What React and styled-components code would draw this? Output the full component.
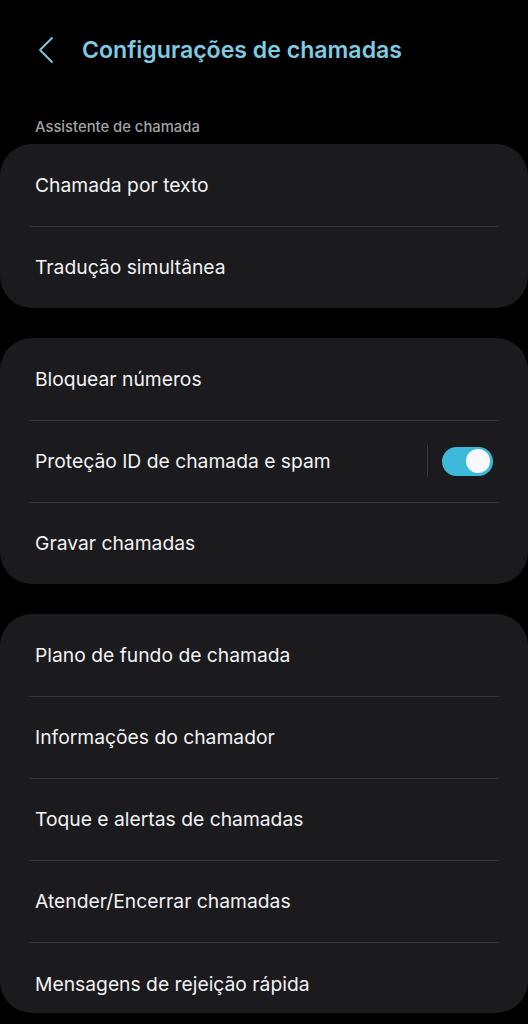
import React from "react"
import styled, { createGlobalStyle } from "styled-components"

const Global = createGlobalStyle`
  html, body {
    margin: 0;
    padding: 0;
    background: #000;
  }
  body {
    font-family: Inter, "Noto Sans", Roboto, sans-serif;
    -webkit-font-smoothing: antialiased;
  }
`

const Screen = styled.div`
  width: 528px;
  height: 1024px;
  overflow: hidden;
  background: #000;
`

const Header = styled.div`
  height: 100px;
  display: flex;
  align-items: center;
  padding-left: 36px;
  box-sizing: border-box;
`

const Back = styled.button`
  width: 20px;
  height: 30px;
  padding: 0;
  border: none;
  background: none;
  display: flex;
  align-items: center;
  justify-content: center;
  margin-right: 26px;
`

const Title = styled.h1`
  margin: 0;
  font-size: 23.1px;
  font-weight: 600;
  color: #7fcbe2;
`

const SectionLabel = styled.div`
  padding: 18px 35px 8px;
  font-size: 14.8px;
  line-height: 18px;
  font-weight: 500;
  color: #a3a3a6;
`

const Card = styled.div`
  background: #1b1b1d;
  border-radius: 32px;
  margin-bottom: 30px;
  display: flex;
  flex-direction: column;
`

const Row = styled.div`
  height: ${p => p.$h || 82}px;
  flex-shrink: 0;
  display: flex;
  align-items: center;
  padding: ${p => p.$pt || 0}px 35px 0;
  position: relative;
  box-sizing: border-box;

  &:not(:first-child)::before {
    content: "";
    position: absolute;
    top: 0;
    left: 29px;
    right: 29px;
    height: 1px;
    background: #343437;
  }
`

const Label = styled.span`
  flex: 1;
  font-size: 19.3px;
  color: #f2f2f4;
`

const VDivider = styled.div`
  width: 1px;
  height: 32px;
  background: #3a3a3d;
  margin-right: 14px;
`

const Switch = styled.div`
  width: 51px;
  height: 29px;
  border-radius: 15px;
  background: ${p => (p.$on ? "#3db9da" : "#555")};
  display: flex;
  align-items: center;
  justify-content: ${p => (p.$on ? "flex-end" : "flex-start")};
  padding: 0 3px;
  box-sizing: border-box;
`

const Knob = styled.div`
  width: 24px;
  height: 24px;
  border-radius: 50%;
  background: #f8f8fe;
`

const groups = [
  ["Chamada por texto", "Tradução simultânea"],
  ["Bloquear números", "Proteção ID de chamada e spam", "Gravar chamadas"],
  [
    "Plano de fundo de chamada",
    "Informações do chamador",
    "Toque e alertas de chamadas",
    "Atender/Encerrar chamadas",
    "Mensagens de rejeição rápida",
  ],
]

export default function App() {
  return (
    <Screen>
      <Global />
      <Header>
        <Back>
          <svg width="16" height="28" viewBox="0 0 16 28">
            <path d="M14 2 L2 14 L14 26" fill="none" stroke="#7fcbe2" strokeWidth="1.8" strokeLinecap="round" strokeLinejoin="round" />
          </svg>
        </Back>
        <Title>Configurações de chamadas</Title>
      </Header>
      <SectionLabel>Assistente de chamada</SectionLabel>
      {groups.map((items, gi) => (
        <Card key={gi}>
          {items.map((item, i) => {
            const last = gi === 2 && i === items.length - 1
            return (
              <Row key={item} $h={last ? 71 : 82} $pt={last ? 13 : 0}>
                <Label>{item}</Label>
                {item.startsWith("Proteção") && (
                  <>
                    <VDivider />
                    <Switch $on>
                      <Knob />
                    </Switch>
                  </>
                )}
              </Row>
            )
          })}
        </Card>
      ))}
    </Screen>
  )
}
